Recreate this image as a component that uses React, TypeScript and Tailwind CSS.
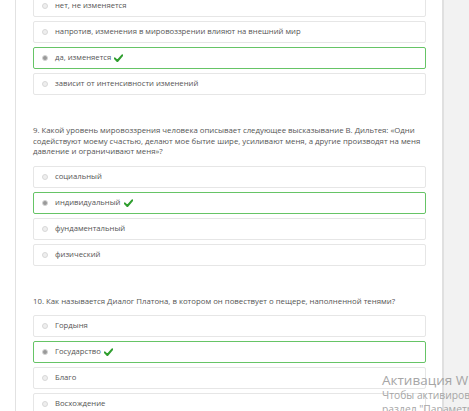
const questions = [
  {
    title: "",
    options: [
      { text: "нет, не изменяется", correct: false },
      { text: "напротив, изменения в мировоззрении влияют на внешний мир", correct: false },
      { text: "да, изменяется", correct: true },
      { text: "зависит от интенсивности изменений", correct: false },
    ],
  },
  {
    title:
      "9. Какой уровень мировоззрения человека описывает следующее высказывание В. Дильтея: «Одни содействуют моему счастью, делают мое бытие шире, усиливают меня, а другие производят на меня давление и ограничивают меня»?",
    options: [
      { text: "социальный", correct: false },
      { text: "индивидуальный", correct: true },
      { text: "фундаментальный", correct: false },
      { text: "физический", correct: false },
    ],
  },
  {
    title: "10. Как называется Диалог Платона, в котором он повествует о пещере, наполненной тенями?",
    options: [
      { text: "Гордыня", correct: false },
      { text: "Государство", correct: true },
      { text: "Благо", correct: false },
      { text: "Восхождение", correct: false },
    ],
  },
];

const Check = () => (
  <svg width="9" height="8" viewBox="0 0 12 10" className="ml-[3px] inline-block">
    <path d="M1 5.5 L4.5 9 L11 1.5" fill="none" stroke="#2f9e2f" strokeWidth="2.8" strokeLinecap="round" strokeLinejoin="round" />
  </svg>
);

const Option = ({ text, correct }: { text: string; correct: boolean }) => (
  <div
    className={
      correct
        ? "h-[22px] flex items-center px-[8px] rounded-[2px] border-[1.5px] border-[#66c466] bg-white"
        : "h-[22px] flex items-center px-[8px] rounded-[2px] border border-[#e6e6e6] bg-white"
    }
  >
    <span
      className={
        correct
          ? "w-[6px] h-[6px] rounded-full border border-[#d4d4d4] bg-[#999] shrink-0"
          : "w-[6px] h-[6px] rounded-full border border-[#d8d8d8] bg-[#eeeeee] shrink-0"
      }
    />
    <span className="ml-[7px] text-[7.7px] text-[#555] leading-none flex items-center">
      {text}
      {correct && <Check />}
    </span>
  </div>
);

export default function App() {
  return (
    <div
      className="relative w-[469px] h-[411px] overflow-hidden flex bg-white"
      style={{ fontFamily: '"Open Sans", "Noto Sans", sans-serif' }}
    >
      <div className="w-[16px] shrink-0 border-r border-[#e2e2e2]" />
      <div className="w-[428px] shrink-0 border-r-2 border-[#e0e0e0] pl-[17px] pr-[16px]">
        <div className="-mt-[5px]">
          {questions.map((q, i) => (
            <div key={i} className={i === 0 ? "" : "mt-[30px]"}>
              {q.title && (
                <p className="text-[7.8px] leading-[10.5px] text-[#555] mb-[9px] pr-[2px]">{q.title}</p>
              )}
              <div className="flex flex-col gap-[4px]">
                {q.options.map((o) => (
                  <Option key={o.text} text={o.text} correct={o.correct} />
                ))}
              </div>
            </div>
          ))}
        </div>
      </div>
      <div className="flex-1 bg-[#f2f2f2]" />
      <div className="absolute left-[382px] top-[372px] text-[#a6a6a6] whitespace-nowrap pointer-events-none">
        <div className="text-[13.5px] leading-[17px]">Активация Windows</div>
        <div className="text-[10.3px] leading-[13px]">Чтобы активировать Windows, перейдите в</div>
        <div className="text-[10.3px] leading-[14px]">раздел "Параметры".</div>
      </div>
    </div>
  );
}
